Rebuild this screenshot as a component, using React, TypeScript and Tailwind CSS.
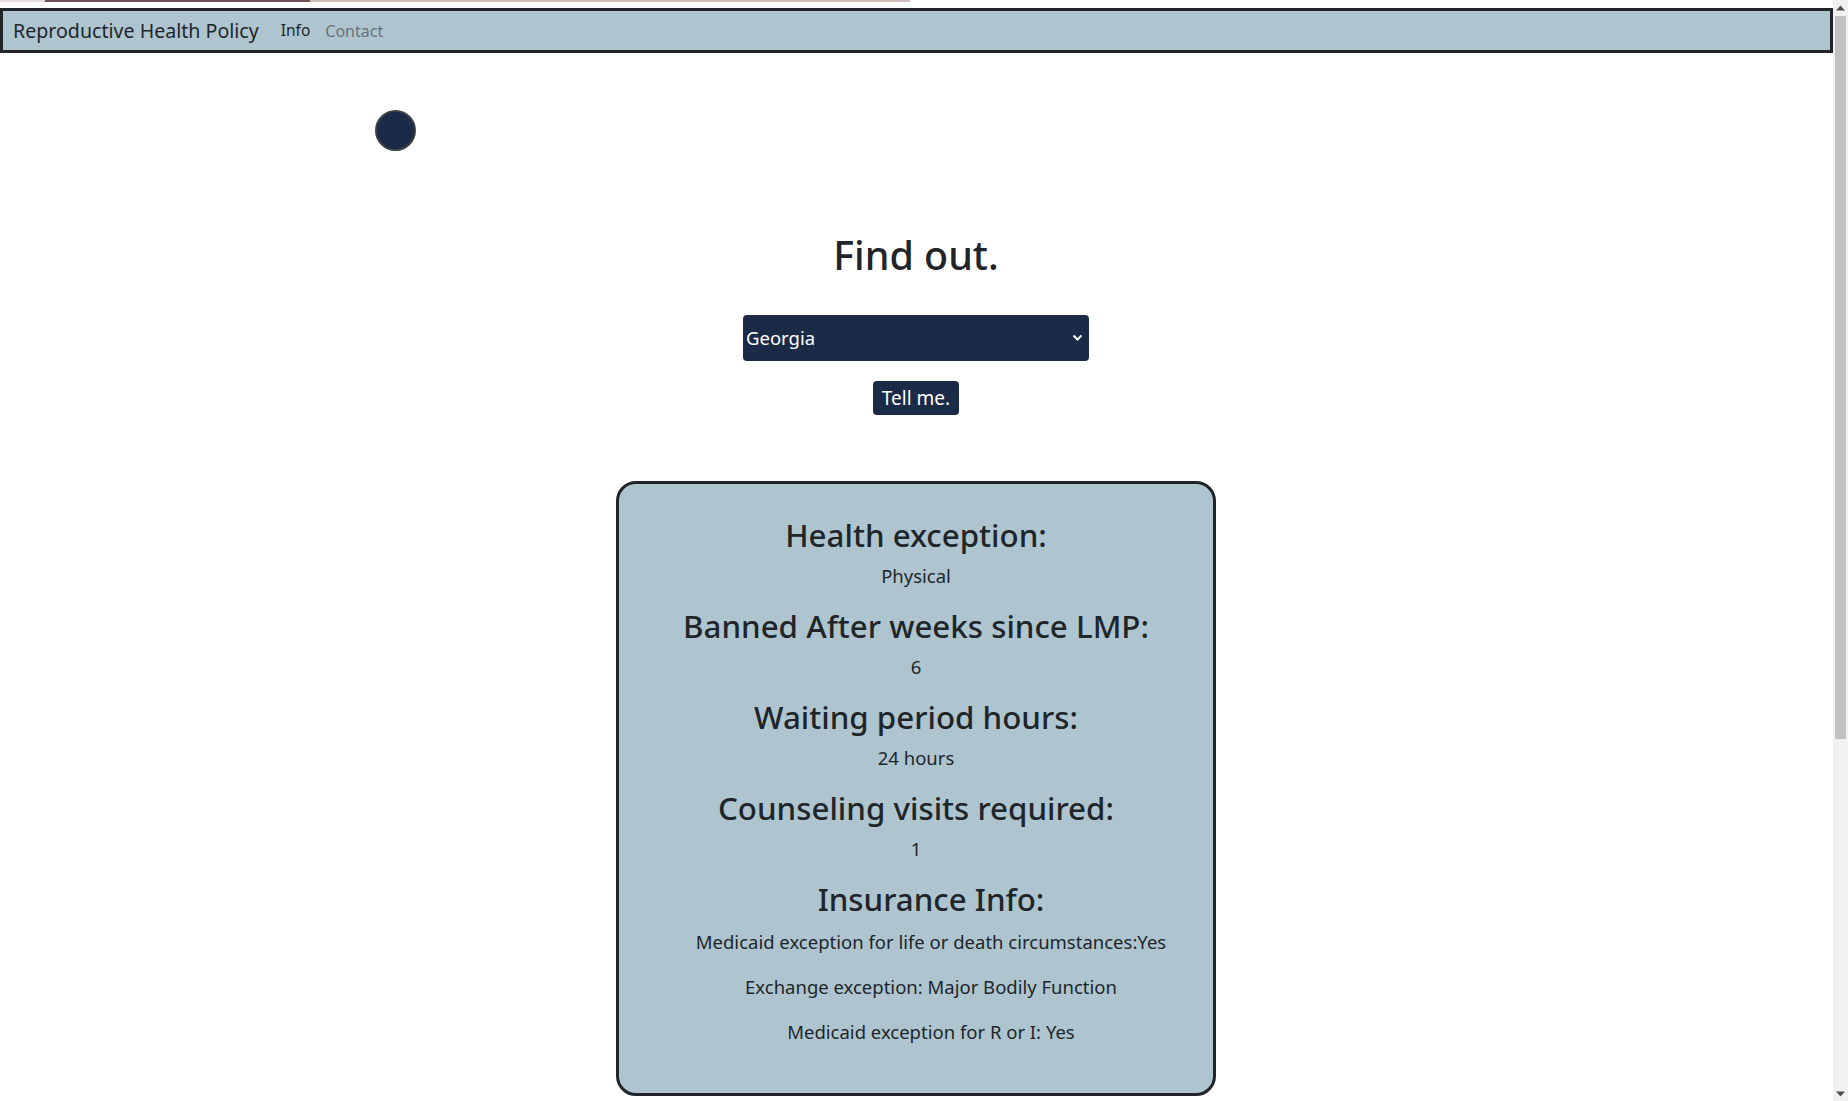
import React from "react";

const font = { fontFamily: '"Noto Sans", "Open Sans", sans-serif' };

function Field({ title, value }: { title: string; value: string }) {
  return (
    <div className="flex flex-col items-center">
      <h2 className="text-[31.3px] leading-[38px] font-medium mb-[8px] text-[#212529] whitespace-nowrap">{title}</h2>
      <p className="text-[18.5px] leading-[27px] mb-[18px] text-[#212529]">{value}</p>
    </div>
  );
}

function Scrollbar() {
  return (
    <div className="w-[15px] h-full bg-[#f1f1f1] flex flex-col items-center shrink-0">
      <div className="h-[15px] w-full flex items-center justify-center">
        <svg width="9" height="6" viewBox="0 0 9 6">
          <path d="M0 5.5L4.5 0.5L9 5.5Z" fill="#505050" />
        </svg>
      </div>
      <div className="w-[11px] h-[723px] bg-[#c1c1c1] mt-[1px]" />
      <div className="flex-1" />
      <div className="h-[15px] w-full flex items-center justify-center">
        <svg width="9" height="6" viewBox="0 0 9 6">
          <path d="M0 0.5L4.5 5.5L9 0.5Z" fill="#505050" />
        </svg>
      </div>
    </div>
  );
}

export default function App() {
  return (
    <div className="h-[1101px] flex overflow-hidden bg-white text-[#212529]" style={font}>
      <div className="flex-1 min-w-0 overflow-hidden">
        <div className="h-[8px] flex items-start">
          <div className="h-[2px] w-[45px] bg-[#e9dcdc]" />
          <div className="h-[2px] w-[265px] bg-[#6e4f52]" />
          <div className="h-[2px] w-[600px] bg-[#cdbcb8]" />
        </div>
        <nav className="h-[45px] border-[3px] border-[#212529] bg-[#aec5cf] flex items-center pl-[10px]">
          <span className="text-[19.6px] text-[#212529] mr-[22px] whitespace-nowrap">Reproductive Health Policy</span>
          <span className="text-[15.5px] text-[#212529] mr-[15px]">Info</span>
          <span className="text-[16px] text-[#6b7276]">Contact</span>
        </nav>
        <div className="pl-[375px] pt-[57px]">
          <div className="w-[41px] h-[41px] rounded-full bg-[#1b2a47] border-[2px] border-[#3c3f44]" />
        </div>
        <div className="flex flex-col items-center pr-[1px]">
          <h1 className="mt-[80px] text-[39.4px] leading-[48px] font-medium text-[#212529]">Find out.</h1>
          <div className="relative mt-[36px] w-[346px] h-[46px]">
            <select
              defaultValue="Georgia"
              className="w-full h-full appearance-none bg-[#1b2a47] text-white text-[18.5px] rounded-[4px] pl-[3px] pr-[24px] outline-none"
              style={font}
            >
              <option>Georgia</option>
            </select>
            <svg
              className="absolute right-[6px] top-[19px] pointer-events-none"
              width="11"
              height="8"
              viewBox="0 0 11 8"
              fill="none"
            >
              <path d="M1.5 1.5l4 4 4-4" stroke="white" strokeWidth="2" />
            </svg>
          </div>
          <button
            className="mt-[20px] h-[34px] w-[86px] bg-[#1b2a47] text-white text-[19px] rounded-[4px] leading-none"
            style={font}
          >
            Tell me.
          </button>
          <div className="mt-[66px] w-[600px] h-[615px] border-[3px] border-[#212529] rounded-[20px] bg-[#aec5cf] flex flex-col items-center pt-[32px] text-center">
            <Field title="Health exception:" value="Physical" />
            <Field title="Banned After weeks since LMP:" value="6" />
            <Field title="Waiting period hours:" value="24 hours" />
            <Field title="Counseling visits required:" value="1" />
            <div className="flex flex-col items-center pl-[30px]">
              <h2 className="text-[31.3px] leading-[38px] font-medium mb-[10px]">Insurance Info:</h2>
              <p className="text-[18.5px] leading-[27px] mb-[18px] whitespace-nowrap">Medicaid exception for life or death circumstances:Yes</p>
              <p className="text-[18.5px] leading-[27px] mb-[18px]">Exchange exception: Major Bodily Function</p>
              <p className="text-[18.5px] leading-[27px]">Medicaid exception for R or I: Yes</p>
            </div>
          </div>
        </div>
      </div>
      <Scrollbar />
    </div>
  );
}
